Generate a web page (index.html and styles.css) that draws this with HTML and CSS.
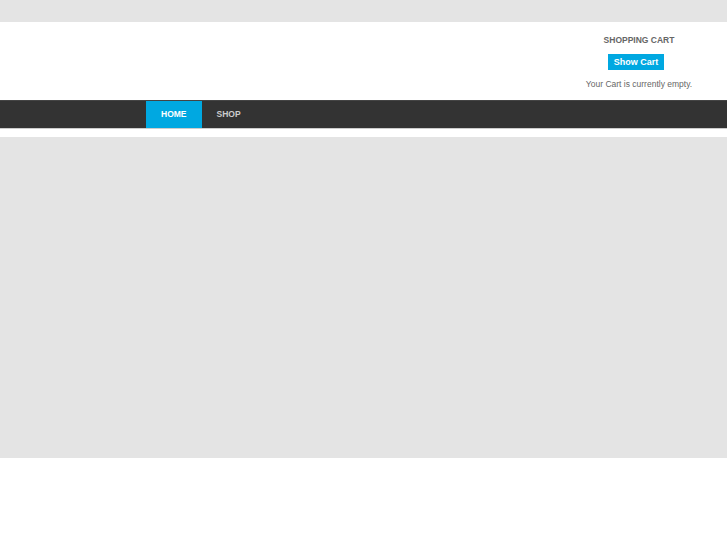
FILE: index.html
```html
<!DOCTYPE html>
<html>
<head>
    <title>Shop</title>
    <link rel="stylesheet" href="styles.css">
</head>
<body>
    <div class="topbar"></div>

    <div class="header">
        <div class="cart">
            <div class="cart-title">SHOPPING CART</div>
            <button class="cart-btn">Show Cart</button>
            <div class="cart-empty">Your Cart is currently empty.</div>
        </div>
    </div>

    <div class="nav">
        <ul class="menu">
            <li class="active"><a href="#">HOME</a></li>
            <li><a href="#">SHOP</a></li>
        </ul>
    </div>

    <div class="banner"></div>
</body>
</html>
```

FILE: styles.css
```css
body {
    margin: 0;
    font-family: "Liberation Sans", Arial, sans-serif;
    background-color: #fff;
}

.topbar {
    height: 22px;
    background-color: #e4e4e4;
}

.header {
    height: 78px;
    display: flex;
    justify-content: flex-end;
    padding-right: 23px;
}

.cart {
    width: 130px;
    text-align: center;
    padding-top: 13px;
}

.cart-title {
    font-size: 8.5px;
    font-weight: bold;
    color: #666;
    line-height: 11px;
}

.cart-btn {
    margin: 8px 6px 0 0;
    padding: 0 6px;
    height: 16px;
    background-color: #00a8e1;
    color: white;
    border: none;
    font-family: "Liberation Sans", Arial, sans-serif;
    font-size: 9px;
    font-weight: bold;
    cursor: pointer;
}

.cart-empty {
    margin-top: 9px;
    font-size: 8.5px;
    color: #666;
    line-height: 11px;
}

.nav {
    height: 29px;
    background-color: #333;
    border-top: 1px solid #444;
    border-bottom: 1px solid #ccc;
    box-sizing: border-box;
}

.menu {
    list-style: none;
    margin: 0 0 0 146px;
    padding: 0;
    display: flex;
    height: 100%;
}

.menu li a {
    display: block;
    padding: 0 15px;
    line-height: 27px;
    font-size: 8.5px;
    font-weight: bold;
    color: #ccc;
    text-decoration: none;
}

.menu li.active a {
    background-color: #00a8e1;
    color: white;
}

.banner {
    margin-top: 8px;
    height: 321px;
    background-color: #e4e4e4;
}
```
